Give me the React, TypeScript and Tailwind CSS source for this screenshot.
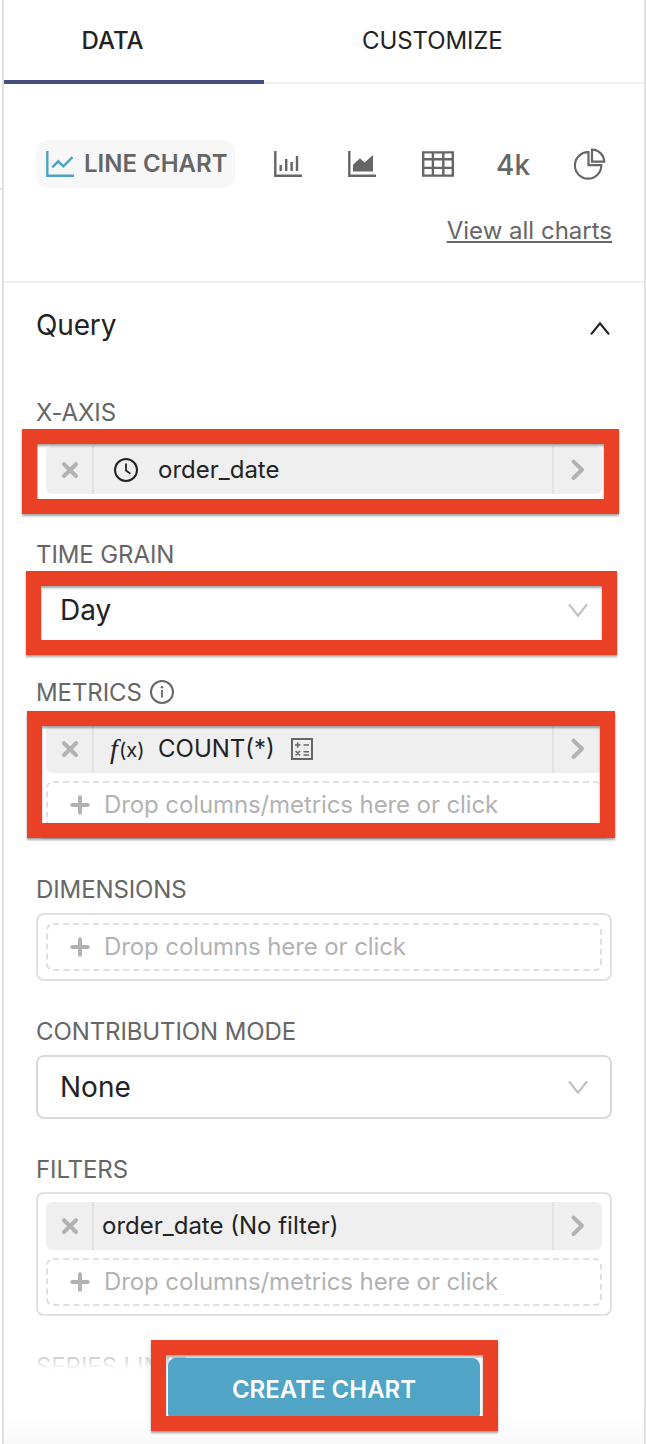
import type { ReactNode } from "react";

function RemoveIcon() {
  return (
    <svg className="ml-0.5 size-5" viewBox="0 0 20 20" fill="none" stroke="#b2b2b2" strokeWidth="4" strokeLinecap="round">
      <path d="M4 4.2l12 11.8M16 4.2L4 16" />
    </svg>
  );
}

function ChevronRight() {
  return (
    <svg className="size-6" viewBox="0 0 24 24" fill="none" stroke="#b2b2b2" strokeWidth="4" strokeLinecap="round" strokeLinejoin="round">
      <path d="M7.5 3.6l8.5 8.2L7.5 20" />
    </svg>
  );
}

function Caret({ up = false, color }: { up?: boolean; color: string }) {
  return (
    <svg className="h-[14px] w-5" viewBox="0 0 20 14" fill="none" stroke={color} strokeWidth="2.2">
      <path d={up ? "M1 12.4L10 1.4L19 12.4" : "M1 1.4L10 12.6L19 1.4"} />
    </svg>
  );
}

function ClockIcon() {
  return (
    <svg className="size-6" viewBox="0 0 24 24" fill="none" stroke="#222" strokeWidth="2">
      <circle cx="12" cy="12" r="11" />
      <path d="M12 5.5v7l4.4 3.2" strokeWidth="1.8" />
    </svg>
  );
}

function InfoIcon() {
  return (
    <svg className="relative -top-px size-6" viewBox="0 0 24 24" fill="none" stroke="#666" strokeWidth="2">
      <circle cx="12" cy="12" r="11" />
      <path d="M12 10v7.5" strokeWidth="1.8" />
      <circle cx="12" cy="7.2" r="1.3" fill="#666" stroke="none" />
    </svg>
  );
}

function CalculatorIcon() {
  return (
    <svg className="size-[22px]" viewBox="0 0 22 22" fill="none" stroke="#666" strokeWidth="2">
      <rect x="1" y="1" width="20" height="20" />
      <path d="M4 7h5.4M6.7 4.3v5.4M12.5 7h5.5M4.6 13l4.4 4.4M9 13l-4.4 4.4M12.5 13.7h5.5M12.5 17h5.5" strokeWidth="1.6" />
    </svg>
  );
}

function LineIcon() {
  return (
    <svg className="h-[26px] w-7" viewBox="0 0 28 26" fill="none" stroke="#4aa3c4" strokeWidth="2.4">
      <path d="M1.3 0v24.7H28M6.3 16.3l6-6 5 5 9.2-9.2" />
    </svg>
  );
}

function BarIcon() {
  return (
    <svg className="h-[26px] w-7" viewBox="0 0 28 26" fill="none" stroke="#666" strokeWidth="2.4">
      <path d="M1.3 0v24.7H28M6.7 14v6M12.2 8v12M17.6 11v9M23 5v15" />
    </svg>
  );
}

function AreaIcon() {
  return (
    <svg className="h-[26px] w-7" viewBox="0 0 28 26" fill="none" stroke="#666" strokeWidth="2.4">
      <path d="M1.3 0v24.7H28" />
      <path d="M5 13.8l7-6.6 4.5 4.3L25 4v16.6H5z" fill="#666" stroke="none" />
    </svg>
  );
}

function TableIcon() {
  return (
    <svg className="h-[26px] w-8" viewBox="0 0 32 26" fill="none" stroke="#666" strokeWidth="2.4">
      <path d="M1.2 1.4h29.6v23.2H1.2zM1.2 8.3h29.6M1.2 16.9h29.6M10.9 1.4v23.2M21.3 1.4v23.2" />
    </svg>
  );
}

function PieIcon() {
  return (
    <svg className="size-8" viewBox="0 0 32 32" fill="none" stroke="#666" strokeWidth="2.2">
      <path d="M14.5 4.2A13.2 13.2 0 1 0 27.3 17.2H14.5z" />
      <path d="M18 1.6V13.6H30.2A12.4 12.4 0 0 0 18 1.6z" />
    </svg>
  );
}

const frame =
  "pointer-events-none absolute z-10 border-[15px] border-[#ea4025] [filter:drop-shadow(0_2px_1px_rgba(0,0,0,0.36))]";

function Section({ label, extra, tight, children }: { label: string; extra?: ReactNode; tight?: boolean; children?: ReactNode }) {
  return (
    <section className="mb-[34px]">
      <h3 className={`flex h-8 items-center gap-2 pt-0.5 text-2xl leading-8 tracking-[-0.1px] text-[#666] ${tight ? "mb-[7px]" : "mb-2"}`}>
        <span>{label}</span>
        {extra}
      </h3>
      <div className="relative">{children}</div>
    </section>
  );
}

function Box({ children }: { children: ReactNode }) {
  return <div className="flex flex-col gap-2 rounded-lg border-2 border-[#e0e0e0] p-2">{children}</div>;
}

function Chip({ children, plain }: { children: ReactNode; plain?: boolean }) {
  return (
    <div className="flex h-12 overflow-hidden rounded-md bg-[#efefef] text-2xl text-[#222]">
      <div className="flex w-12 items-center justify-center border-r-2 border-[#e2e2e2]">
        <RemoveIcon />
      </div>
      <div className={`flex flex-1 items-center ${plain ? "pl-2" : "pl-3"}`}>{children}</div>
      <div className="flex w-[50px] items-center justify-center border-l-2 border-[#e2e2e2]">
        <ChevronRight />
      </div>
    </div>
  );
}

function Drop({ text }: { text: string }) {
  return (
    <div className="relative flex h-12 items-center pl-6 text-2xl tracking-[-0.1px] text-[#b2b2b2]">
      <svg className="absolute inset-0 size-full" fill="none">
        <rect x="1" y="1" width="554" height="46" rx="6" stroke="#e0e0e0" strokeWidth="2" strokeDasharray="6 4" />
      </svg>
      <svg className="mr-3.5 size-5" viewBox="0 0 20 20" fill="none" stroke="#b2b2b2" strokeWidth="4" strokeLinecap="round">
        <path d="M10 2.2v15.6M2.2 10h15.6" />
      </svg>
      <span>{text}</span>
    </div>
  );
}

function Select({ value }: { value: string }) {
  return (
    <div className="flex h-16 items-center justify-between rounded-lg border-2 border-[#d9d9d9] pr-[22px] pl-[22px] text-[28px] text-[#222]">
      <span>{value}</span>
      <Caret color="#bfbfbf" />
    </div>
  );
}

export default function App() {
  return (
    <div className="flex h-[1444px] w-[646px] overflow-hidden bg-white font-['Inter',sans-serif]">
      <div className="mt-[188px] h-0.5 w-0.5 bg-[#e0e0e0]" />
      <main className="relative h-full w-[644px] border-x-2 border-[#e0e0e0]">
        <nav className="flex h-[84px] text-2xl text-[#222]">
          <div className="flex w-[260px] justify-center border-b-4 border-[#444e7c] pt-[25px] pr-[43px] font-medium">
            <span className="h-8 leading-8">DATA</span>
          </div>
          <div className="flex flex-1 border-b-2 border-[#f0f0f0] pt-[25px] pl-[98px]">
            <span className="h-8 leading-8 tracking-[-0.1px]">CUSTOMIZE</span>
          </div>
        </nav>

        <div className="h-[199px] border-b-2 border-[#f0f0f0] px-8 pt-14">
          <div className="flex h-12 items-center text-[#666]">
            <div className="flex h-12 w-[199px] items-center gap-2.5 rounded-xl bg-[#f7f7f7] pl-2.5 text-2xl font-semibold">
              <LineIcon />
              <span className="whitespace-nowrap">LINE CHART</span>
            </div>
            <div className="ml-[39px]"><BarIcon /></div>
            <div className="ml-[46px]"><AreaIcon /></div>
            <div className="ml-[46px]"><TableIcon /></div>
            <span className="ml-[42px] w-9 pt-px text-[28px] font-medium">4k</span>
            <div className="ml-[42px]"><PieIcon /></div>
          </div>
          <div className="mt-[27px] flex justify-end text-2xl leading-8 text-[#666]">
            <span className="underline decoration-2 underline-offset-[2px]">View all charts</span>
          </div>
        </div>

        <div className="px-8">
          <header className="flex h-[113px] items-start justify-between pt-[22px] pr-0.5">
            <h2 className="text-[28px] leading-10 tracking-[-0.15px] text-[#222]">Query</h2>
            <div className="pt-[17px]"><Caret up color="#222" /></div>
          </header>

          <Section label="X-AXIS">
            <Box>
              <Chip>
                <div className="flex w-[52px] items-center pl-2"><ClockIcon /></div>
                <span>order_date</span>
              </Chip>
            </Box>
            <div className={`${frame} -top-[7px] -left-3.5 h-[85px] w-[597px]`} />
          </Section>

          <Section label="TIME GRAIN">
            <Select value="Day" />
            <div className={`${frame} -top-[7px] -left-2.5 h-[84px] w-[591px]`} />
          </Section>

          <Section label="METRICS" extra={<InfoIcon />} tight>
            <Box>
              <Chip>
                <div className="flex w-[52px] items-center pl-1">
                  <span className="w-[9px] font-['Liberation_Serif',serif] text-[28px] italic">f</span>
                  <span className="pt-0.5 text-xl">(x)</span>
                </div>
                <span className="mr-4">COUNT(*)</span>
                <CalculatorIcon />
              </Chip>
              <Drop text="Drop columns/metrics here or click" />
            </Box>
            <div className={`${frame} -top-1 -left-[9px] h-[127px] w-[588px]`} />
          </Section>

          <Section label="DIMENSIONS">
            <Box>
              <Drop text="Drop columns here or click" />
            </Box>
          </Section>

          <Section label="CONTRIBUTION MODE">
            <Select value="None" />
          </Section>

          <Section label="FILTERS" tight>
            <Box>
              <Chip plain>
                <span>order_date (No filter)</span>
              </Chip>
              <Drop text="Drop columns/metrics here or click" />
            </Box>
          </Section>

          <Section label="SERIES LIMIT" />
        </div>

        <footer className="absolute inset-x-0 bottom-0 flex h-[104px] justify-center bg-[linear-gradient(to_bottom,rgba(255,255,255,0)_0px,rgba(255,255,255,0.72)_18px,#fff_30px,#fff_70px,#f9f9f9_104px)] pt-[18px]">
          <button className="h-16 w-[312px] rounded-lg bg-[#50a4c5] text-2xl font-semibold text-white">CREATE CHART</button>
          <div className={`${frame} top-0 left-[147px] h-[91px] w-[347px]`} />
        </footer>
      </main>
    </div>
  );
}
